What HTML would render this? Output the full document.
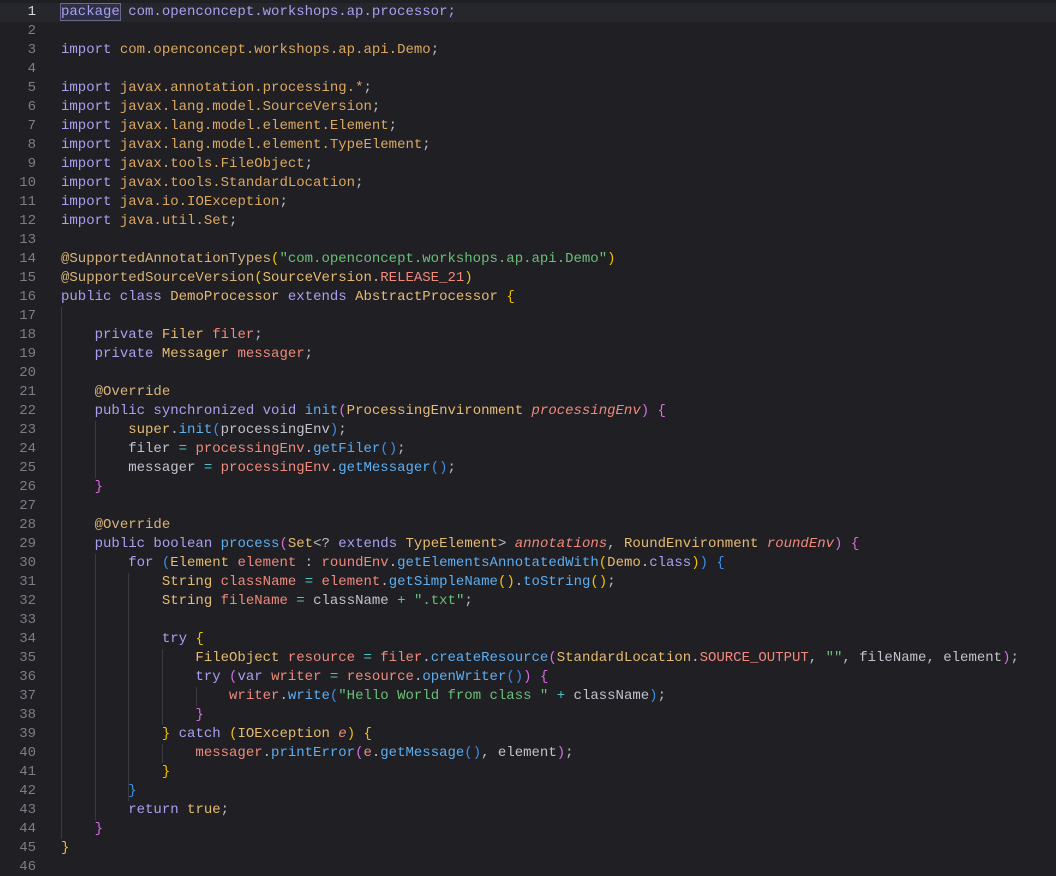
<!DOCTYPE html>
<html><head><meta charset="utf-8">
<style>
html,body{margin:0;padding:0;background:#1f1f24;width:1056px;height:876px;overflow:hidden}
body{position:relative;font-family:"Liberation Mono","DejaVu Sans Mono",monospace;font-size:14px;color:#bcbcc6}
.hl{position:absolute;left:0;top:3px;width:1056px;height:19px;background:#26262d}
.gut{position:absolute;left:0;top:3px;width:36px;text-align:right;color:#7d7d88;line-height:19px;white-space:pre}
.gut .cur{color:#d8d8e0}
.code{position:absolute;left:61px;top:3px;line-height:19px;white-space:pre}
.g{position:absolute;width:1px;background:#3a3a42}
.k{color:#a9a1f0}.t{color:#e6bb72}.f{color:#ef8a7c}.m{color:#5eaef0}.s{color:#6cbf78}.o{color:#4cc5c5}
.a{color:#d8b47c}.v{color:#c2c2cc}.pk{color:#a9a1f0}.ip{color:#dca860}
.i{font-style:italic}
.y{color:#f2c200}.p{color:#d66ee0}.b{color:#3c8ee6}
.sel{outline:1px solid #6a6a88;background:#2f2f45}
</style></head><body>
<div class="hl"></div>
<div class="g" style="left:61px;top:307px;height:532px"></div>
<div class="g" style="left:95px;top:421px;height:57px"></div>
<div class="g" style="left:95px;top:554px;height:266px"></div>
<div class="g" style="left:128px;top:573px;height:228px"></div>
<div class="g" style="left:162px;top:649px;height:76px"></div>
<div class="g" style="left:196px;top:687px;height:19px"></div>
<div class="g" style="left:162px;top:744px;height:19px"></div>
<div class="gut"><span class="cur">1</span>
2
3
4
5
6
7
8
9
10
11
12
13
14
15
16
17
18
19
20
21
22
23
24
25
26
27
28
29
30
31
32
33
34
35
36
37
38
39
40
41
42
43
44
45
46</div>
<div class="code"><span class="k sel">package</span><span class="pk"> com.openconcept.workshops.ap.processor;</span>

<span class="k">import</span> <span class="ip">com.openconcept.workshops.ap.api.Demo</span>;

<span class="k">import</span> <span class="ip">javax.annotation.processing.*</span>;
<span class="k">import</span> <span class="ip">javax.lang.model.SourceVersion</span>;
<span class="k">import</span> <span class="ip">javax.lang.model.element.Element</span>;
<span class="k">import</span> <span class="ip">javax.lang.model.element.TypeElement</span>;
<span class="k">import</span> <span class="ip">javax.tools.FileObject</span>;
<span class="k">import</span> <span class="ip">javax.tools.StandardLocation</span>;
<span class="k">import</span> <span class="ip">java.io.IOException</span>;
<span class="k">import</span> <span class="ip">java.util.Set</span>;

<span class="a">@SupportedAnnotationTypes</span><span class="y">(</span><span class="s">"com.openconcept.workshops.ap.api.Demo"</span><span class="y">)</span>
<span class="a">@SupportedSourceVersion</span><span class="y">(</span><span class="t">SourceVersion</span>.<span class="f">RELEASE_21</span><span class="y">)</span>
<span class="k">public class</span> <span class="t">DemoProcessor</span> <span class="k">extends</span> <span class="t">AbstractProcessor</span> <span class="y">{</span>

    <span class="k">private</span> <span class="t">Filer</span> <span class="f">filer</span>;
    <span class="k">private</span> <span class="t">Messager</span> <span class="f">messager</span>;

    <span class="a">@Override</span>
    <span class="k">public synchronized void</span> <span class="m">init</span><span class="p">(</span><span class="t">ProcessingEnvironment</span> <span class="f i">processingEnv</span><span class="p">)</span> <span class="p">{</span>
        <span class="t">super</span>.<span class="m">init</span><span class="b">(</span><span class="v">processingEnv</span><span class="b">)</span>;
        <span class="v">filer</span> <span class="o">=</span> <span class="f">processingEnv</span>.<span class="m">getFiler</span><span class="b">()</span>;
        <span class="v">messager</span> <span class="o">=</span> <span class="f">processingEnv</span>.<span class="m">getMessager</span><span class="b">()</span>;
    <span class="p">}</span>

    <span class="a">@Override</span>
    <span class="k">public boolean</span> <span class="m">process</span><span class="p">(</span><span class="t">Set</span>&lt;? <span class="k">extends</span> <span class="t">TypeElement</span>&gt; <span class="f i">annotations</span>, <span class="t">RoundEnvironment</span> <span class="f i">roundEnv</span><span class="p">)</span> <span class="p">{</span>
        <span class="k">for</span> <span class="b">(</span><span class="t">Element</span> <span class="f">element</span> : <span class="f">roundEnv</span>.<span class="m">getElementsAnnotatedWith</span><span class="y">(</span><span class="t">Demo</span>.<span class="k">class</span><span class="y">)</span><span class="b">)</span> <span class="b">{</span>
            <span class="t">String</span> <span class="f">className</span> <span class="o">=</span> <span class="f">element</span>.<span class="m">getSimpleName</span><span class="y">()</span>.<span class="m">toString</span><span class="y">()</span>;
            <span class="t">String</span> <span class="f">fileName</span> <span class="o">=</span> <span class="v">className</span> <span class="o">+</span> <span class="s">".txt"</span>;

            <span class="k">try</span> <span class="y">{</span>
                <span class="t">FileObject</span> <span class="f">resource</span> <span class="o">=</span> <span class="f">filer</span>.<span class="m">createResource</span><span class="p">(</span><span class="t">StandardLocation</span>.<span class="f">SOURCE_OUTPUT</span>, <span class="s">""</span>, <span class="v">fileName</span>, <span class="v">element</span><span class="p">)</span>;
                <span class="k">try</span> <span class="p">(</span><span class="k">var</span> <span class="f">writer</span> <span class="o">=</span> <span class="f">resource</span>.<span class="m">openWriter</span><span class="b">()</span><span class="p">)</span> <span class="p">{</span>
                    <span class="f">writer</span>.<span class="m">write</span><span class="b">(</span><span class="s">"Hello World from class "</span> <span class="o">+</span> <span class="v">className</span><span class="b">)</span>;
                <span class="p">}</span>
            <span class="y">}</span> <span class="k">catch</span> <span class="y">(</span><span class="t">IOException</span> <span class="f i">e</span><span class="y">)</span> <span class="y">{</span>
                <span class="f">messager</span>.<span class="m">printError</span><span class="p">(</span><span class="f">e</span>.<span class="m">getMessage</span><span class="b">()</span>, <span class="v">element</span><span class="p">)</span>;
            <span class="y">}</span>
        <span class="b">}</span>
        <span class="k">return</span> <span class="t">true</span>;
    <span class="p">}</span>
<span class="y">}</span>
</div>
</body></html>
